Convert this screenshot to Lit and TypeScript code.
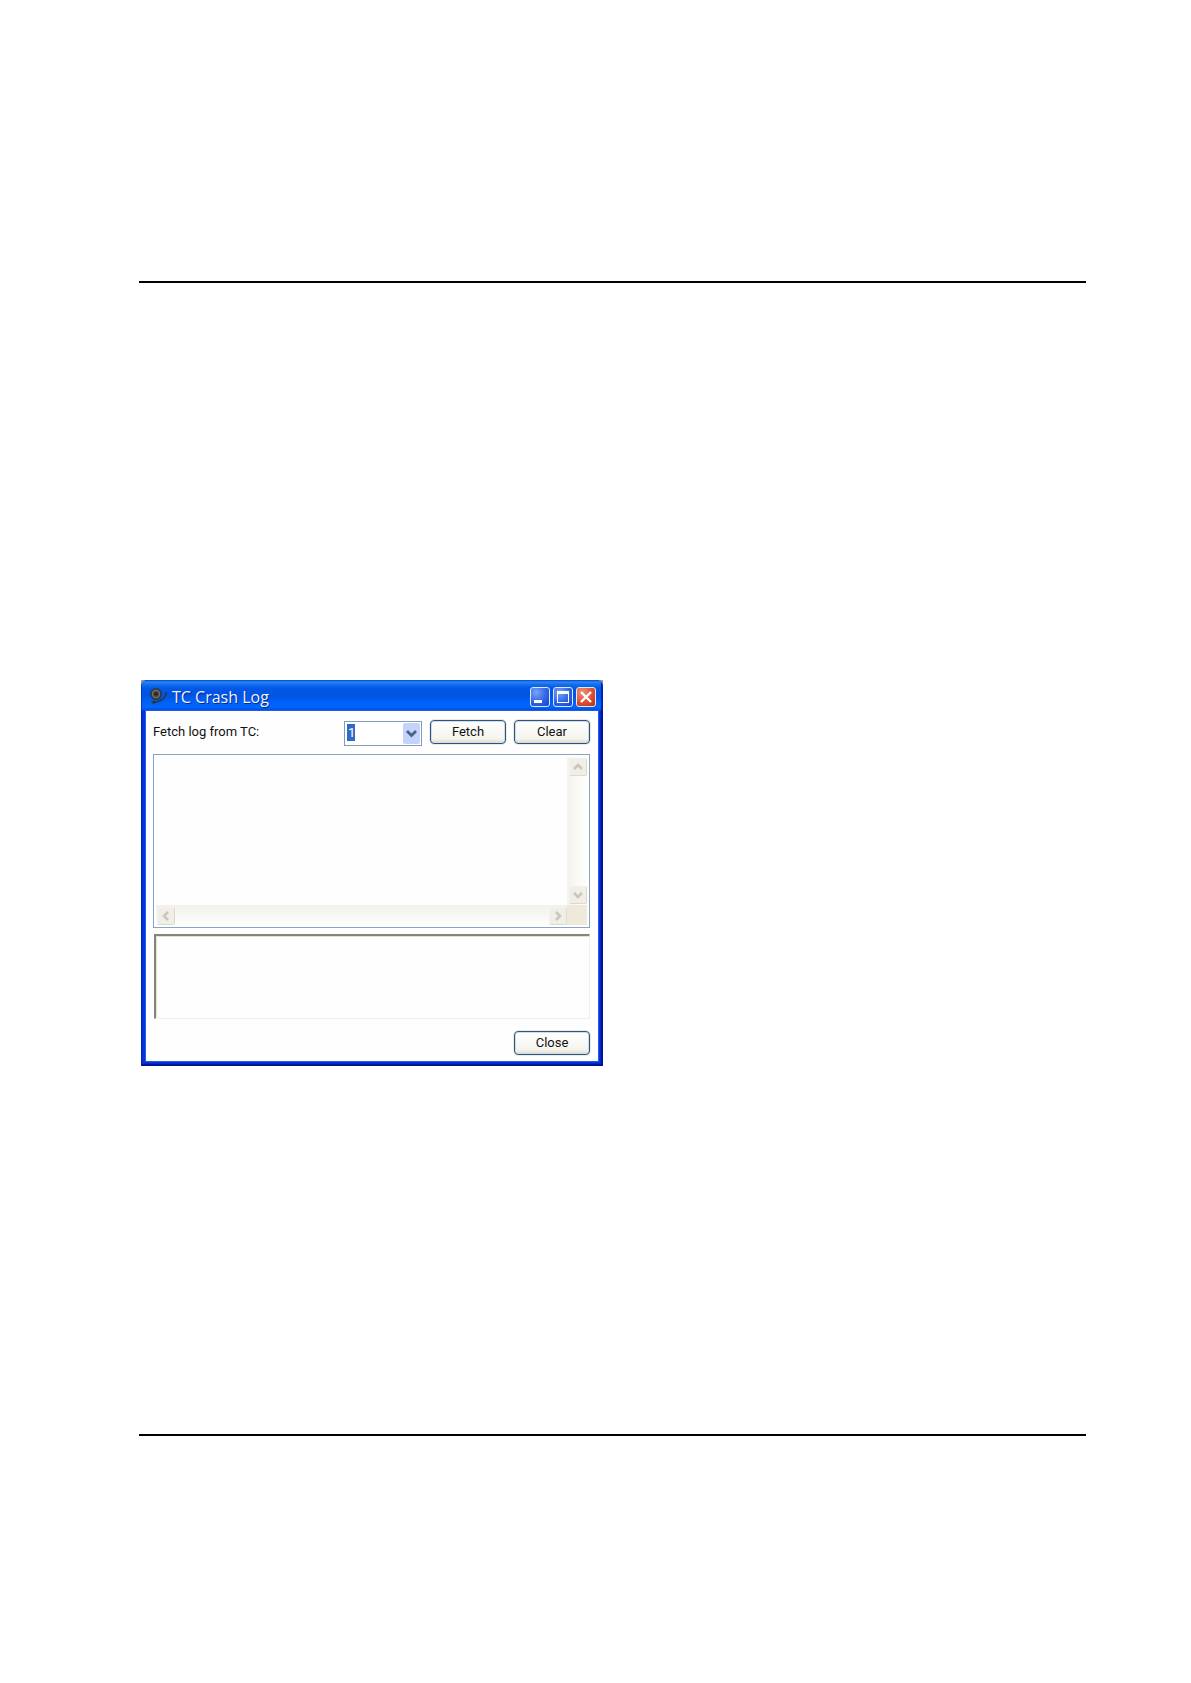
import { LitElement, html, css, svg } from "lit";
import { customElement } from "lit/decorators.js";

const chevrons = {
  up: "M5 11L9 7L13 11",
  down: "M5 7L9 11L13 7",
  left: "M11 5L7 9L11 13",
  right: "M7 5L11 9L7 13",
};

@customElement("crash-log-window")
export class CrashLogWindow extends LitElement {
  static styles = css`
    :host {
      display: block;
      max-width: 462px;
      font-family: Roboto, "Liberation Sans", sans-serif;
      font-size: 13px;
      color: #111;
    }
    * { box-sizing: border-box; }
    .corners { background: #8d99ad; }
    .frame {
      border-radius: 7px 7px 0 0;
      background: #0831d9;
      box-shadow: inset 1px 0 #0020b8, inset -2px -2px #00139a, inset -3px -3px #0528c4;
      overflow: hidden;
    }
    .titlebar {
      display: flex;
      align-items: center;
      height: 31px;
      padding: 3px 7px 0;
      background: linear-gradient(#0448c0 0, #2b86fa 2px, #1573f2 4px, #0458e6 8px, #0054e3 16px, #0062fa 23px, #0066ff 27px, #0050dc 30px, #0040c8 31px);
      box-shadow: inset 1px 0 #0038c8, inset -2px 0 #0024b0;
    }
    .logo { width: 22px; height: 22px; flex: none; margin-right: 2px; }
    h1 {
      flex: 1;
      margin: 0;
      font: 500 16px/20px "Open Sans", "Noto Sans", sans-serif;
      color: #eef3ff;
      text-shadow: 1px 1px #0a2a8a;
      white-space: nowrap;
    }
    .controls { display: flex; gap: 3px; }
    .control {
      width: 20px;
      height: 20px;
      padding: 0;
      border: 1px solid #dce8ff;
      border-radius: 3px;
      background: radial-gradient(circle at 30% 25%, #7ca3f5, #2f64e4 55%, #1445c8);
    }
    .control.close { background: radial-gradient(circle at 30% 25%, #ee9478, #dc5030 55%, #b8300c); }
    svg { display: block; }
    .content {
      margin: 0 5px 5px;
      padding: 9px 8px 6px 7px;
      background: #fefefe;
      box-shadow: 0 0 0 1px #1c5cf0;
    }
    .toolbar { display: flex; align-items: flex-start; gap: 8px; margin-bottom: 9px; }
    .toolbar label { flex: 1; line-height: 24px; }
    .combo { display: grid; width: 78px; height: 25px; margin-top: 1px; margin-bottom: -1px; }
    .combo > * { grid-area: 1 / 1; }
    .combo select {
      width: 100%;
      height: 25px;
      padding: 0 0 2px 3px;
      border: 1px solid #7f9db9;
      border-radius: 0;
      appearance: none;
      font: inherit;
      color: #fff;
      background: linear-gradient(#316ac5, #316ac5) 2px 2px / 8px 17px no-repeat #fff;
    }
    .combo select option { color: #111; background: #fff; }
    .combo svg { justify-self: end; align-self: center; margin-right: 2px; pointer-events: none; }
    .push {
      width: 76px;
      height: 24px;
      padding: 0;
      border: 1px solid #2a5580;
      border-radius: 4px;
      background: linear-gradient(#fff, #f5f4ee 80%, #dedacf);
      box-shadow: inset 0 0 0 1px #d3dce6, 0 0 0 1px #eeece2;
      font: inherit;
      line-height: 20px;
      color: #111;
    }
    .log {
      display: grid;
      grid-template-columns: 1fr 20px;
      grid-template-rows: 1fr 20px;
      height: 174px;
      padding: 2px;
      border: 1px solid #86a4c8;
      background: #fff;
    }
    textarea {
      width: 100%;
      height: 100%;
      padding: 4px;
      border: 0;
      resize: none;
      overflow: hidden;
      background: #fefefe;
      font: inherit;
    }
    .bar { display: flex; justify-content: space-between; }
    .bar.vertical { flex-direction: column; padding: 1px 0 1px 2px; background: linear-gradient(90deg, #f4f3ed, #fefefd); }
    .bar.horizontal { padding: 2px 0 0 1px; background: linear-gradient(#f2f1ea, #fefefd); }
    .arrow {
      width: 18px;
      height: 18px;
      padding: 0;
      border: 1px solid #dcd9ce;
      border-top-color: #f3f2ec;
      border-left-color: #f3f2ec;
      border-radius: 2px;
      background: #f0eee7;
    }
    .arrow svg { margin: -1px; }
    .grip { background: #eee9da; }
    .status {
      display: block;
      height: 85px;
      margin: 6px 0 12px 1px;
      border: 2px solid #84847a;
      border-right: 1px solid #f1efe8;
      border-bottom: 1px solid #f1efe8;
      box-shadow: inset 1px 1px #e2e1db;
    }
    .footer { display: flex; justify-content: flex-end; }
  `;

  private arrow(direction: keyof typeof chevrons) {
    return html`<button class="arrow" type="button" aria-label="Scroll ${direction}">
      <svg width="18" height="18" viewBox="0 0 18 18" fill="none" stroke="#c8c6be" stroke-width="2.6">
        ${svg`<path d=${chevrons[direction]} />`}
      </svg>
    </button>`;
  }

  render() {
    return html`
      <div class="corners"><section class="frame" aria-labelledby="title">
        <header class="titlebar">
          <svg class="logo" viewBox="0 0 22 22" aria-hidden="true">
            <path d="M18.500 6C18 12 12 16.500 4 16.500" fill="none" stroke="#26394f" stroke-width="1.600" />
            <path d="M2.500 16L7 14V18.500Z" fill="#26394f" />
            <circle cx="8" cy="8" r="6" fill="#30383e" />
            <circle cx="8" cy="8" r="3.800" fill="#45474a" stroke="#7b7a74" />
            <circle cx="8" cy="8" r="1.800" fill="#24292c" />
          </svg>
          <h1 id="title">TC Crash Log</h1>
          <div class="controls">
            <button class="control" type="button" aria-label="Minimize">
              <svg width="18" height="18"><path d="M3 12H11V15H3Z" fill="#fff" /></svg>
            </button>
            <button class="control" type="button" aria-label="Maximize">
              <svg width="18" height="18"><path d="M3 3H15V15H3ZM4 6V14H14V6Z" fill="#fff" fill-rule="evenodd" /></svg>
            </button>
            <button class="control close" type="button" aria-label="Close window">
              <svg width="18" height="18"><path d="M4 4L14 14M14 4L4 14" stroke="#fff" stroke-width="2.400" /></svg>
            </button>
          </div>
        </header>
        <div class="content">
          <div class="toolbar">
            <label for="tc">Fetch log from TC:</label>
            <div class="combo">
              <select id="tc"><option>1</option></select>
              <svg width="17" height="21" viewBox="0 0 17 21" aria-hidden="true">
                <rect width="17" height="21" rx="2" fill="#c3d3fb" />
                <path d="M4 8L8.500 12.500L13 8" fill="none" stroke="#4d6185" stroke-width="2.800" />
              </svg>
            </div>
            <button class="push" type="button">Fetch</button>
            <button class="push" type="button">Clear</button>
          </div>
          <div class="log">
            <textarea aria-label="Crash log" readonly></textarea>
            <div class="bar vertical">${this.arrow("up")}${this.arrow("down")}</div>
            <div class="bar horizontal">${this.arrow("left")}${this.arrow("right")}</div>
            <div class="grip"></div>
          </div>
          <output class="status" aria-label="Status"></output>
          <div class="footer"><button class="push" type="button">Close</button></div>
        </div>
      </section></div>
    `;
  }
}

@customElement("app-root")
export class AppRoot extends LitElement {
  static styles = css`
    :host { display: block; min-height: 100vh; background: #fff; }
    .page { padding: 281px 105px 240px 139px; }
    .body {
      padding: 397px 0 368px 2px;
      border-top: 2px solid #000;
      border-bottom: 2px solid #000;
    }
  `;

  render() {
    return html`<main class="page"><div class="body"><crash-log-window></crash-log-window></div></main>`;
  }
}
